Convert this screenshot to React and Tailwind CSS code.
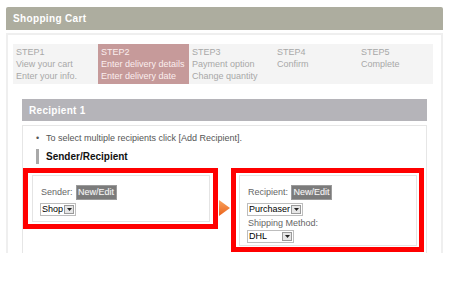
import { Fragment } from "react"

//This component draws a fake select box like the old browser ones
function FakeSelect(props) {
    const { value, width } = props
    return (
        <div className={`flex flex-row items-stretch h-[13px] border border-[#bdbdbd] bg-white ${width}`}>
            <span className="flex-1 pl-[1px] pr-[1px] text-[9px] leading-[11px] text-black whitespace-nowrap">{value}</span>
            <span className="w-[10px] my-[1px] mr-[1px] border border-[#9a9a9a] bg-[#e6e6e6] flex items-center justify-center">
                <svg width="5" height="3" viewBox="0 0 5 3"><polygon points="0,0 5,0 2.5,3" fill="#222" /></svg>
            </span>
        </div>
    )
}

//This component is the dark grey New/Edit button
function EditButton() {
    return (
        <span className="ml-[3px] h-[15px] w-[41px] bg-[#7b7b7b] border border-[#9b9b9b] text-[#f4f4f4] text-[9px] leading-[13px] text-center [text-shadow:0_0_1px_#aaa]">New/Edit</span>
    )
}

function App() {
    const steps = [
        { title: 'STEP1', lines: ['View your cart', 'Enter your info.'], width: 'w-[85px]', active: false },
        { title: 'STEP2', lines: ['Enter delivery details', 'Enter delivery date'], width: 'w-[91px]', active: true },
        { title: 'STEP3', lines: ['Payment option', 'Change quantity'], width: 'w-[85px]', active: false },
        { title: 'STEP4', lines: ['Confirm'], width: 'w-[84px]', active: false },
        { title: 'STEP5', lines: ['Complete'], width: 'w-[75px]', active: false },
    ] //steps shown on top of the cart

    return (
        <Fragment>
            <div className="w-[450px] h-[300px] bg-white overflow-hidden font-['Liberation_Sans',Arial,sans-serif]">
                <div className="pt-[7px] pl-[6px] w-[443px]">
                    {/*Title bar */}
                    <div className="h-[23px] bg-[#adad9f] rounded-t-[2px] flex items-center pl-[7px] text-white font-bold text-[10px] tracking-[0.35px]">Shopping Cart</div>

                    <div className="mt-[3px] h-[220px] border-2 border-b-0 border-[#efefef] pt-[9px] pl-[5px] pr-[8px]">
                        {/*Steps row */}
                        <div className="flex flex-row h-[40px] w-[420px]">
                            {steps.map(step => {
                                return <div key={step.title} className={`${step.width} pl-[3px] pt-[2px] text-[9px] leading-[12px] ${step.active ? 'bg-[#c69a9a] text-[#fbeeee]' : 'bg-[#f4f4f4] text-[#a8a8a8]'}`}>
                                    <p>{step.title}</p>
                                    {step.lines.map(line => <p key={line}>{line}</p>)}
                                </div>
                            })}
                        </div>

                        {/*Recipient section */}
                        <div className="ml-[9px] mt-[15px] w-[405px]">
                            <div className="h-[22px] bg-[#b5b4b9] flex items-center pl-[7px] text-white font-bold text-[10px] tracking-[0.3px]">Recipient 1</div>
                            <div className="mt-[4px] h-[128px] border border-b-0 border-[#e6e6e6]">
                                <div className="pt-[6px] pl-[13px] flex flex-row text-[9px] leading-[12px] text-[#555]">
                                    <span className="w-[10px]">•</span>
                                    <span>To select multiple recipients click [Add Recipient].</span>
                                </div>
                                <div className="mt-[5px] ml-[13px] h-[15px] flex flex-row items-center">
                                    <span className="w-[3px] h-[15px] bg-[#a9a9a9]"></span>
                                    <span className="ml-[7px] text-[10px] font-bold text-[#111]">Sender/Recipient</span>
                                </div>

                                <div className="mt-[4px] flex flex-row items-start">
                                    {/*Sender box */}
                                    <div className="w-[195px] h-[61px] border-[5px] border-[#ff0000] pl-[4px] pr-[3px] pt-[2px]">
                                        <div className="h-[47px] border border-[#e4e4e4] pt-[9px] pl-[8px]">
                                            <div className="flex flex-row items-center">
                                                <span className="text-[9px] text-[#666]">Sender:</span>
                                                <EditButton />
                                            </div>
                                            <div className="mt-[3px] -ml-[1px] flex">
                                                <FakeSelect value="Shop" width="min-w-[36px]" />
                                            </div>
                                        </div>
                                    </div>

                                    {/*Orange arrow */}
                                    <div className="w-[13px] mt-[32px] pl-[1px]">
                                        <svg width="12" height="16" viewBox="0 0 12 16">
                                            <defs>
                                                <linearGradient id="arrowFill" x1="0" y1="0" x2="0" y2="1">
                                                    <stop offset="0" stopColor="#f9a35e" />
                                                    <stop offset="1" stopColor="#ea621a" />
                                                </linearGradient>
                                            </defs>
                                            <polygon points="0,0 11,8 0,16" fill="url(#arrowFill)" />
                                        </svg>
                                    </div>

                                    {/*Recipient box */}
                                    <div className="w-[193px] h-[84px] border-[5px] border-[#ff0000] pl-[3px] pr-[2px] pt-[2px]">
                                        <div className="h-[71px] border border-[#e4e4e4] pt-[9px] pl-[8px]">
                                            <div className="flex flex-row items-center">
                                                <span className="text-[9px] text-[#666]">Recipient:</span>
                                                <EditButton />
                                            </div>
                                            <div className="mt-[3px] -ml-[1px] flex">
                                                <FakeSelect value="Purchaser" width="min-w-[56px]" />
                                            </div>
                                            <p className="mt-[1px] text-[9px] leading-[12px] text-[#666]">Shipping Method:</p>
                                            <div className="mt-[1px] -ml-[1px] flex">
                                                <FakeSelect value="DHL" width="w-[47px]" />
                                            </div>
                                        </div>
                                    </div>
                                </div>
                            </div>
                        </div>
                    </div>
                </div>
            </div>
        </Fragment>
    )
}
export default App
